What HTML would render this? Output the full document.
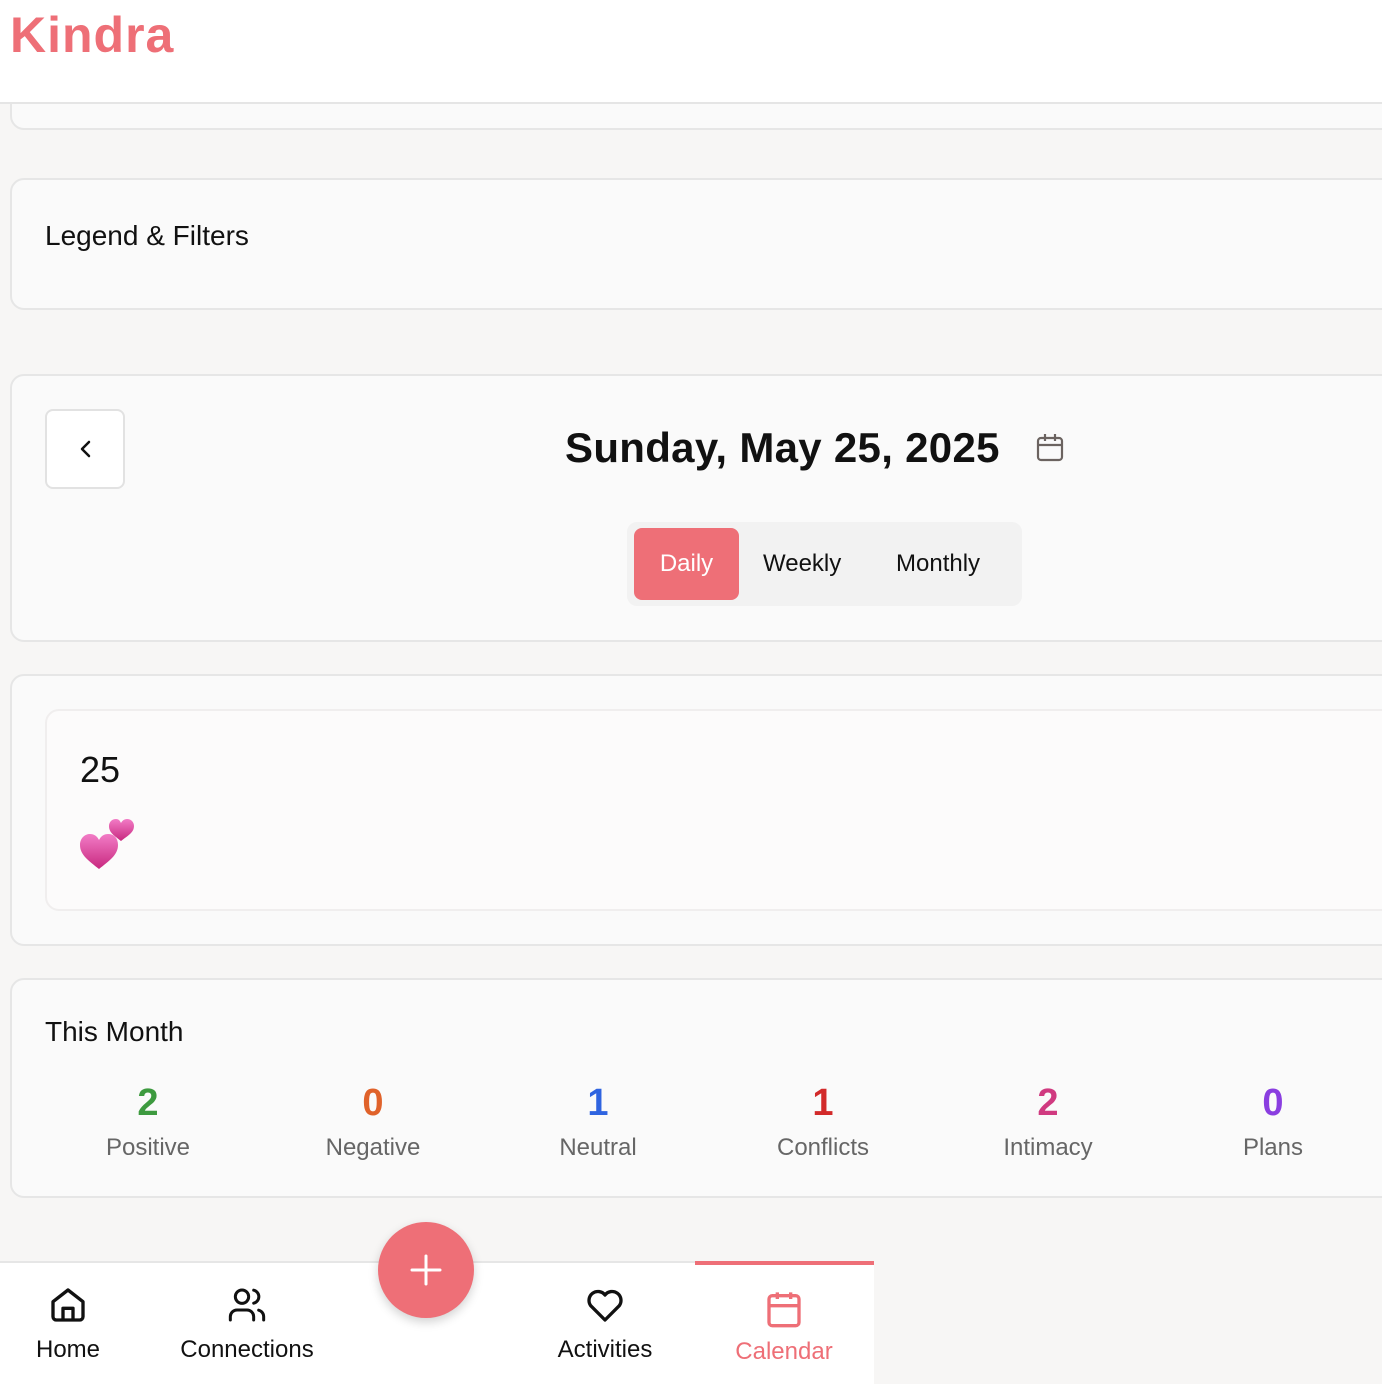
<!DOCTYPE html>
<html><head><style>
*{box-sizing:border-box;margin:0;padding:0}
body{width:1382px;height:1384px;overflow:hidden;background:#f7f6f5;font-family:"Liberation Sans",sans-serif;position:relative;color:#111}
.hdr{position:absolute;left:0;top:0;width:1382px;height:104px;background:#fff;border-bottom:2px solid #e5e5e5;z-index:5}
.logo{position:absolute;left:10px;top:6px;font-size:50px;font-weight:bold;color:#ee6f77;letter-spacing:1px}
.card{position:absolute;left:10px;width:1400px;background:#fafafa;border:2px solid #e6e6e6;border-radius:14px}
.t{position:absolute;font-size:28px}
.num{position:absolute;top:1082px;width:200px;text-align:center;font-size:38px;font-weight:bold}
.lbl{position:absolute;top:1134px;width:200px;text-align:center;font-size:24px;color:#666}
.nav{position:absolute;left:0;top:1261px;width:874px;height:123px;background:#fff;border-top:2px solid #e6e6e6}
.ni{position:absolute;top:1336px;font-size:24px;text-align:center;width:180px}
</style></head><body>
<div class="hdr"><div class="logo">Kindra</div></div>
<div class="card" style="top:60px;height:70px"></div>
<div class="card" style="top:178px;height:132px"><div class="t" style="left:33px;top:40px">Legend &amp; Filters</div></div>
<div class="card" style="top:374px;height:268px">
 <div style="position:absolute;left:33px;top:33px;width:80px;height:80px;border:2px solid #e2e2e2;border-radius:8px;background:#fff">
  <svg width="80" height="80" style="position:absolute;left:-2px;top:-2px"><path d="M44 33 L37 40 L44 47" fill="none" stroke="#111" stroke-width="2.5" stroke-linecap="round" stroke-linejoin="round"/></svg></div>
 <div style="position:absolute;left:553px;top:48px;font-size:42px;font-weight:bold;letter-spacing:0.3px">Sunday, May 25, 2025</div>
 <svg style="position:absolute;left:1022px;top:56px" width="32" height="32" viewBox="0 0 32 32" fill="none" stroke="#6b6360" stroke-width="2.2"><rect x="4" y="6" width="24" height="22" rx="3"/><path d="M4 13h24M11 2v7M21 2v7"/></svg>
 <div style="position:absolute;left:615px;top:146px;width:395px;height:84px;background:#f2f2f2;border-radius:10px"></div>
 <div style="position:absolute;left:622px;top:152px;width:105px;height:72px;background:#ee6f77;border-radius:8px;color:#fff;font-size:24px;text-align:center;line-height:72px">Daily</div>
 <div style="position:absolute;left:751px;top:152px;font-size:24px;line-height:72px">Weekly</div>
 <div style="position:absolute;left:884px;top:152px;font-size:24px;line-height:72px">Monthly</div>
</div>
<div class="card" style="top:674px;height:272px">
 <div style="position:absolute;left:33px;top:33px;width:1400px;height:202px;background:#fcfbfb;border:2px solid #f0eeee;border-radius:14px">
  <div style="position:absolute;left:33px;top:38px;font-size:36px">25</div>
  <svg style="position:absolute;left:32px;top:102px" width="60" height="62" viewBox="0 0 60 62"><defs><linearGradient id="g" x1="0" y1="0" x2="0" y2="1"><stop offset="0" stop-color="#f27cc6"/><stop offset="1" stop-color="#c8287f"/></linearGradient></defs>
   <path d="M42 28 C36 23 30 20 30 13 C30 9 33 6 37 6 C40 6 41 8 42 10 C43 8 45 6 48 6 C52 6 55 9 55 13 C55 20 48 23 42 28Z" fill="url(#g)"/>
   <path d="M20 56 C10 48 1 42 1 32 C1 25 6 21 11 21 C15 21 18 23 20 27 C22 23 25 21 29 21 C35 21 39 25 39 32 C39 42 30 48 20 56Z" fill="url(#g)"/></svg>
 </div>
</div>
<div class="card" style="top:978px;height:220px"><div class="t" style="left:33px;top:36px">This Month</div></div>
<div class="num" style="left:48px;color:#3d9a3f">2</div><div class="lbl" style="left:48px">Positive</div>
<div class="num" style="left:273px;color:#e0622a">0</div><div class="lbl" style="left:273px">Negative</div>
<div class="num" style="left:498px;color:#2f64e0">1</div><div class="lbl" style="left:498px">Neutral</div>
<div class="num" style="left:723px;color:#d22a2a">1</div><div class="lbl" style="left:723px">Conflicts</div>
<div class="num" style="left:948px;color:#d03a80">2</div><div class="lbl" style="left:948px">Intimacy</div>
<div class="num" style="left:1173px;color:#8a3ee0">0</div><div class="lbl" style="left:1173px">Plans</div>
<div class="nav"></div>
<div style="position:absolute;left:695px;top:1261px;width:179px;height:4px;background:#ee6f77"></div>
<svg style="position:absolute;left:48px;top:1285px" width="40" height="40" viewBox="0 0 24 24" fill="none" stroke="#111" stroke-width="2" stroke-linejoin="round"><path d="M3 10 L12 3 L21 10 V19 a2 2 0 0 1-2 2 H5 a2 2 0 0 1-2-2Z"/><path d="M9 21 V14 h6 v7"/></svg>
<svg style="position:absolute;left:227px;top:1285px" width="40" height="40" viewBox="0 0 24 24" fill="none" stroke="#111" stroke-width="1.8" stroke-linecap="round"><circle cx="9" cy="7" r="4"/><path d="M2 21v-2a4 4 0 0 1 4-4h6a4 4 0 0 1 4 4v2M16 3.1a4 4 0 0 1 0 7.8M22 21v-2a4 4 0 0 0-3-3.9"/></svg>
<svg style="position:absolute;left:585px;top:1285px" width="40" height="40" viewBox="0 0 24 24" fill="none" stroke="#111" stroke-width="2" stroke-linejoin="round"><path d="M12 21 L3.5 12.5 A5 5 0 0 1 12 6 A5 5 0 0 1 20.5 12.5Z"/></svg>
<svg style="position:absolute;left:764px;top:1288px" width="40" height="42" viewBox="0 0 24 24" fill="none" stroke="#ee6f77" stroke-width="2"><rect x="3" y="4" width="18" height="18" rx="2"/><path d="M3 10h18M8 2v4M16 2v4"/></svg>
<div class="ni" style="left:-22px">Home</div>
<div class="ni" style="left:157px">Connections</div>
<div class="ni" style="left:515px">Activities</div>
<div class="ni" style="left:694px;top:1338px;color:#ee6f77">Calendar</div>
<div style="position:absolute;left:378px;top:1222px;width:96px;height:96px;border-radius:50%;background:#ee6f77;box-shadow:0 4px 10px rgba(0,0,0,0.18)">
<svg width="96" height="96" style="position:absolute;left:0;top:0"><path d="M48 34v28M34 48h28" stroke="#fff" stroke-width="3" stroke-linecap="round"/></svg></div>
</body></html>
